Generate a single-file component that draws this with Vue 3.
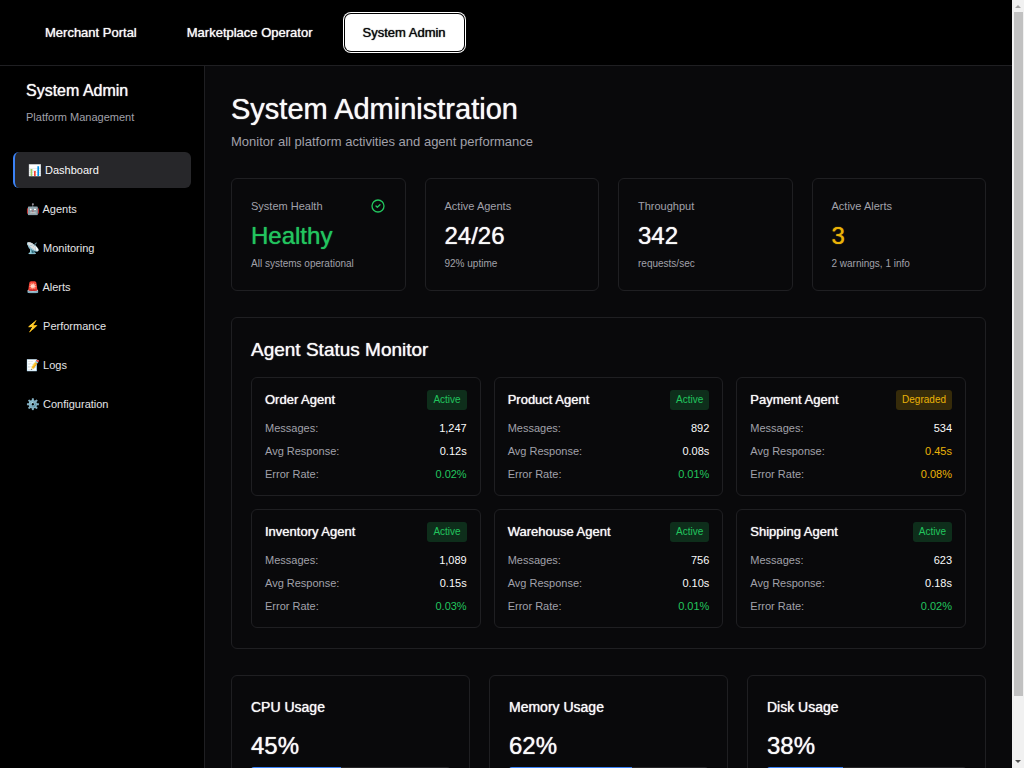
<script setup>
import { ref } from 'vue'

const portals = ['Merchant Portal', 'Marketplace Operator', 'System Admin']
const activePortal = ref('System Admin')

const menu = [
  { icon: '📊', label: 'Dashboard' },
  { icon: '🤖', label: 'Agents' },
  { icon: '📡', label: 'Monitoring' },
  { icon: '🚨', label: 'Alerts' },
  { icon: '⚡', label: 'Performance' },
  { icon: '📝', label: 'Logs' },
  { icon: '⚙️', label: 'Configuration' },
]
const activeItem = ref('Dashboard')

const stats = [
  { label: 'System Health', value: 'Healthy', note: 'All systems operational', tone: 'good', check: true },
  { label: 'Active Agents', value: '24/26', note: '92% uptime' },
  { label: 'Throughput', value: '342', note: 'requests/sec' },
  { label: 'Active Alerts', value: '3', note: '2 warnings, 1 info', tone: 'warn' },
]

const agents = [
  { name: 'Order Agent', messages: '1,247', response: '0.12s', errors: '0.02%' },
  { name: 'Product Agent', messages: '892', response: '0.08s', errors: '0.01%' },
  { name: 'Payment Agent', messages: '534', response: '0.45s', errors: '0.08%', degraded: true },
  { name: 'Inventory Agent', messages: '1,089', response: '0.15s', errors: '0.03%' },
  { name: 'Warehouse Agent', messages: '756', response: '0.10s', errors: '0.01%' },
  { name: 'Shipping Agent', messages: '623', response: '0.18s', errors: '0.02%' },
]

const usage = [
  { label: 'CPU Usage', percent: 45 },
  { label: 'Memory Usage', percent: 62 },
  { label: 'Disk Usage', percent: 38 },
]
</script>

<template>
  <div class="window">
    <div class="page">
      <nav class="topbar" aria-label="Portals">
        <button
          v-for="p in portals"
          :key="p"
          type="button"
          class="portal"
          :class="{ active: p === activePortal }"
          @click="activePortal = p"
        >{{ p }}</button>
      </nav>

      <div class="body">
        <aside class="sidebar">
          <header class="side-head">
            <h2>System Admin</h2>
            <p>Platform Management</p>
          </header>
          <nav class="menu" aria-label="Platform">
            <a
              v-for="m in menu"
              :key="m.label"
              href="#"
              class="item"
              :class="{ active: m.label === activeItem }"
              @click.prevent="activeItem = m.label"
            >{{ m.icon }} {{ m.label }}</a>
          </nav>
        </aside>

        <main class="content">
          <header class="head">
            <h1>System Administration</h1>
            <p>Monitor all platform activities and agent performance</p>
          </header>

          <section class="stats">
            <article v-for="s in stats" :key="s.label" class="card stat">
              <div class="stat-top">
                <span>{{ s.label }}</span>
                <svg v-if="s.check" class="check" viewBox="0 0 24 24" fill="none" stroke="currentColor" stroke-width="2" aria-hidden="true">
                  <path stroke-linecap="round" stroke-linejoin="round" d="M9 12l2 2 4-4m6 2a9 9 0 11-18 0 9 9 0 0118 0z" />
                </svg>
              </div>
              <div class="value" :class="s.tone">{{ s.value }}</div>
              <div class="note">{{ s.note }}</div>
            </article>
          </section>

          <section class="card monitor">
            <h2>Agent Status Monitor</h2>
            <div class="agents">
              <article v-for="a in agents" :key="a.name" class="card agent">
                <header class="agent-head">
                  <h3>{{ a.name }}</h3>
                  <span class="badge" :class="{ degraded: a.degraded }">{{ a.degraded ? 'Degraded' : 'Active' }}</span>
                </header>
                <dl>
                  <div class="row"><dt>Messages:</dt><dd>{{ a.messages }}</dd></div>
                  <div class="row"><dt>Avg Response:</dt><dd :class="{ warn: a.degraded }">{{ a.response }}</dd></div>
                  <div class="row"><dt>Error Rate:</dt><dd :class="a.degraded ? 'warn' : 'good'">{{ a.errors }}</dd></div>
                </dl>
              </article>
            </div>
          </section>

          <section class="usages">
            <article v-for="u in usage" :key="u.label" class="card usage">
              <h3>{{ u.label }}</h3>
              <div class="value">{{ u.percent }}%</div>
              <div class="track"><div class="fill" :style="{ width: u.percent + '%' }"></div></div>
            </article>
          </section>
        </main>
      </div>
    </div>

    <div class="rail" aria-hidden="true">
      <svg class="arrow dim" viewBox="0 0 12 12"><path d="M6 5l3 3H3z" /></svg>
      <div class="rail-track"><div class="thumb"></div></div>
      <svg class="arrow" viewBox="0 0 12 12"><path d="M3 4h6L6 7z" /></svg>
    </div>
  </div>
</template>

<style>
body {
  background: #09090b;
}
</style>

<style scoped>
.window {
  display: flex;
  height: 100vh;
  font-family: "Liberation Sans", Arial, sans-serif;
  font-size: 11px;
  line-height: 16px;
  color: #fafafa;
}
.window * {
  box-sizing: border-box;
}
h1, h2, h3, p, dl, dd {
  margin: 0;
}
h1, h2, h3, .value, .portal {
  font-weight: 400;
  text-shadow: 0 0 1px currentColor;
}
.page {
  flex: 1;
  min-width: 0;
  display: flex;
  flex-direction: column;
  overflow-y: auto;
  scrollbar-width: none;
  background: #09090b;
}
.topbar {
  flex: none;
  display: flex;
  gap: 14px;
  padding: 14px 27px;
  background: #000;
  border-bottom: 1px solid #1f1f22;
}
.portal {
  padding: 11px 18px;
  border: 0;
  border-radius: 6px;
  background: transparent;
  color: #fafafa;
  font-family: inherit;
  font-size: 13px;
  line-height: 15px;
}
.portal.active {
  background: #fff;
  color: #09090b;
  box-shadow: 0 0 0 1px #000, 0 0 0 2px #fff;
}
.body {
  flex: 1 0 auto;
  display: flex;
}
.sidebar {
  flex: none;
  width: 205px;
  background: #000;
  border-right: 1px solid #1f1f22;
}
.side-head {
  padding: 13px 26px 26px;
}
.side-head h2 {
  font-size: 16px;
  line-height: 24px;
}
.side-head p {
  margin-top: 6px;
  color: #a1a1aa;
}
.menu {
  display: flex;
  flex-direction: column;
  gap: 3px;
  padding: 1px 13px;
}
.item {
  padding: 10px 13px;
  border-radius: 6px;
  color: #e4e4e7;
  text-decoration: none;
}
.item.active {
  background: #27272a;
  border-left: 2px solid #3b82f6;
  color: #fafafa;
}
.content {
  flex: 1;
  min-width: 0;
  padding: 26px;
}
.head h1 {
  font-size: 29px;
  line-height: 34px;
}
.head p {
  margin-top: 6px;
  font-size: 13px;
  line-height: 20px;
  color: #a1a1aa;
}
.card {
  border: 1px solid #1f1f22;
  border-radius: 6px;
}
.stats {
  display: grid;
  grid-template-columns: repeat(4, 1fr);
  gap: 19px;
  margin-top: 26px;
}
.stat {
  padding: 19px;
}
.stat-top {
  display: flex;
  justify-content: space-between;
  align-items: center;
  color: #a1a1aa;
}
.check {
  width: 16px;
  height: 16px;
  color: #22c55e;
}
.value {
  font-size: 24px;
  line-height: 32px;
}
.stat .value {
  margin-top: 6px;
}
.note {
  margin-top: 4px;
  font-size: 10px;
  line-height: 15px;
  color: #a1a1aa;
}
.good {
  color: #22c55e;
}
.warn {
  color: #eab308;
}
.monitor {
  margin-top: 26px;
  padding: 19px 19px 20px;
}
.monitor h2 {
  font-size: 19px;
  line-height: 26px;
}
.agents {
  display: grid;
  grid-template-columns: repeat(3, 1fr);
  gap: 13px;
  margin-top: 14px;
}
.agent {
  padding: 12px 13px;
}
.agent-head {
  display: flex;
  justify-content: space-between;
  align-items: center;
}
.agent-head h3 {
  font-size: 13px;
  line-height: 20px;
}
.badge {
  padding: 2px 6px;
  border-radius: 3px;
  background: rgba(34, 197, 94, 0.2);
  color: #22c55e;
  font-size: 10px;
}
.badge.degraded {
  background: rgba(234, 179, 8, 0.2);
  color: #eab308;
}
.agent dl {
  display: grid;
  gap: 6px;
  margin-top: 10px;
}
.row {
  display: flex;
  justify-content: space-between;
  line-height: 17px;
}
.row dt {
  color: #a1a1aa;
}
.usages {
  display: grid;
  grid-template-columns: repeat(3, 1fr);
  gap: 19px;
  margin-top: 26px;
}
.usage {
  padding: 19px;
}
.usage h3 {
  font-size: 14px;
  line-height: 24px;
}
.usage .value {
  margin-top: 11px;
}
.track {
  height: 6px;
  margin-top: 5px;
  border-radius: 3px;
  background: #27272a;
  overflow: hidden;
}
.fill {
  height: 100%;
  background: #3b82f6;
}
.rail {
  flex: none;
  width: 12px;
  display: flex;
  flex-direction: column;
  background: #f1f1f1;
}
.arrow {
  width: 12px;
  height: 12px;
  fill: #505050;
}
.arrow.dim {
  fill: #a3a3a3;
}
.rail-track {
  flex: 1;
  padding: 0 1px 0 2px;
}
.thumb {
  height: 92%;
  background: #c1c1c1;
}
</style>
